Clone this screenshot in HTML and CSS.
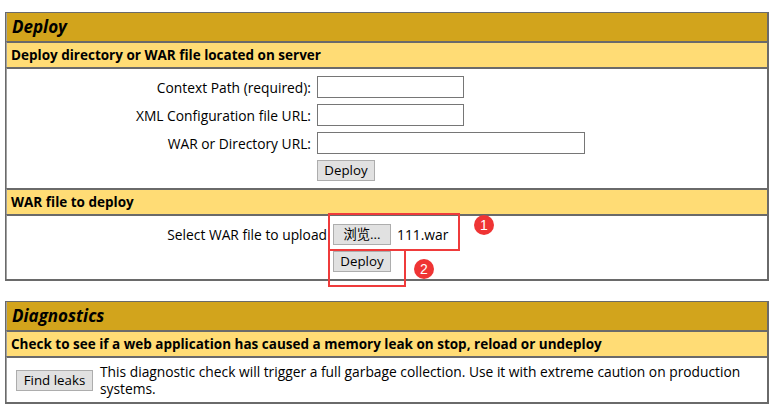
FILE: index.html
```html
<!DOCTYPE html>
<html>
<head>
<meta charset="utf-8">
<link rel="stylesheet" href="styles.css">
</head>
<body>
<div class="section">
  <div class="title">Deploy</div>
  <div class="header">Deploy directory or WAR file located on server</div>
  <div class="body">
    <div class="form-grid">
      <div class="label">Context Path (required):</div>
      <div class="field"><input class="text" type="text"></div>
      <div class="label">XML Configuration file URL:</div>
      <div class="field"><input class="text" type="text"></div>
      <div class="label">WAR or Directory URL:</div>
      <div class="field"><input class="text wide" type="text"></div>
      <div class="label"></div>
      <div class="field"><button class="btn">Deploy</button></div>
    </div>
  </div>
  <div class="header">WAR file to deploy</div>
  <div class="body war">
    <div class="war-grid">
      <div class="label">Select WAR file to upload</div>
      <div class="field file"><button class="btn browse">浏览...</button><span class="filename">111.war</span></div>
      <div class="label"></div>
      <div class="field"><button class="btn">Deploy</button></div>
    </div>
    <div class="mark box1"></div>
    <div class="mark box2"></div>
    <div class="badge badge1">1</div>
    <div class="badge badge2">2</div>
  </div>
</div>
<div class="section second">
  <div class="title">Diagnostics</div>
  <div class="header">Check to see if a web application has caused a memory leak on stop, reload or undeploy</div>
  <div class="body diag">
    <button class="btn leaks">Find leaks</button>
    <p class="diag-text">This diagnostic check will trigger a full garbage collection. Use it with extreme caution on production systems.</p>
  </div>
</div>
</body>
</html>
```
FILE: styles.css
```css
html, body {
  margin: 0;
  background: #fff;
}
body {
  padding: 12px 4px 0 5px;
  font-family: "Open Sans", "Noto Sans CJK SC", sans-serif;
  font-size: 13.8px;
  color: #000;
}
.section {
  border: 1px solid #6a6a6a;
  border-right-width: 2px;
  border-bottom-width: 2px;
  width: 761px;
}
.second {
  margin-top: 20px;
}
.title {
  background: #d2a41c;
  font-size: 17px;
  font-weight: bold;
  font-style: italic;
  line-height: 22px;
  padding: 3px 5px;
  border-left: 1px solid #a0a0a0;
}
.header {
  background: #ffdc75;
  font-weight: bold;
  font-size: 13.5px;
  line-height: 18px;
  padding: 3px 4px;
  border-top: 2px solid #6a6a6a;
  border-left: 1px solid #a0a0a0;
}
.body {
  border-top: 2px solid #6a6a6a;
  border-left: 1px solid #a0a0a0;
  padding: 4px 0 4px 0;
  position: relative;
}
.form-grid, .war-grid {
  display: grid;
  grid-template-columns: 307px auto;
  grid-auto-rows: auto;
  align-items: center;
}
.war-grid {
  grid-template-columns: 323px auto;
}
.label {
  text-align: right;
  padding: 3px;
}
.field {
  padding: 3px;
  display: flex;
  align-items: center;
}
.text {
  box-sizing: border-box;
  width: 147px;
  height: 22px;
  border: 1px solid #767676;
  margin: 0;
  padding: 0 2px;
  background: #fff;
}
.text.wide {
  width: 268px;
}
.btn {
  box-sizing: border-box;
  height: 21px;
  padding: 0 6px;
  margin: 0;
  background: #e1e1e1;
  border: 1px solid #adadad;
  font-family: "Open Sans", "Noto Sans CJK SC", sans-serif;
  font-size: 13.3px;
  line-height: 19px;
  color: #000;
  min-width: 58px;
}
.browse {
  width: 58px;
}
.filename {
  margin-left: 6px;
}
.war {
  padding: 5px 0 4px;
}
.mark {
  position: absolute;
  border: 2px solid #ef3b3b;
  box-sizing: border-box;
}
.box1 {
  left: 321px;
  top: -3px;
  width: 132px;
  height: 38px;
}
.box2 {
  left: 321px;
  top: 33px;
  width: 78px;
  height: 38px;
}
.badge {
  position: absolute;
  width: 20px;
  height: 20px;
  border-radius: 50%;
  background: #ef3434;
  color: #fff;
  font-size: 14px;
  line-height: 20px;
  text-align: center;
  font-family: "Liberation Sans", sans-serif;
}
.badge1 {
  left: 467px;
  top: -1px;
}
.badge2 {
  left: 407px;
  top: 43px;
}
.diag {
  display: flex;
  align-items: center;
  padding: 5px 20px 5px 9px;
}
.leaks {
  flex: none;
  width: 77px;
  padding: 0;
}
.diag-text {
  margin: 0 0 0 7px;
  line-height: 17px;
}
```
